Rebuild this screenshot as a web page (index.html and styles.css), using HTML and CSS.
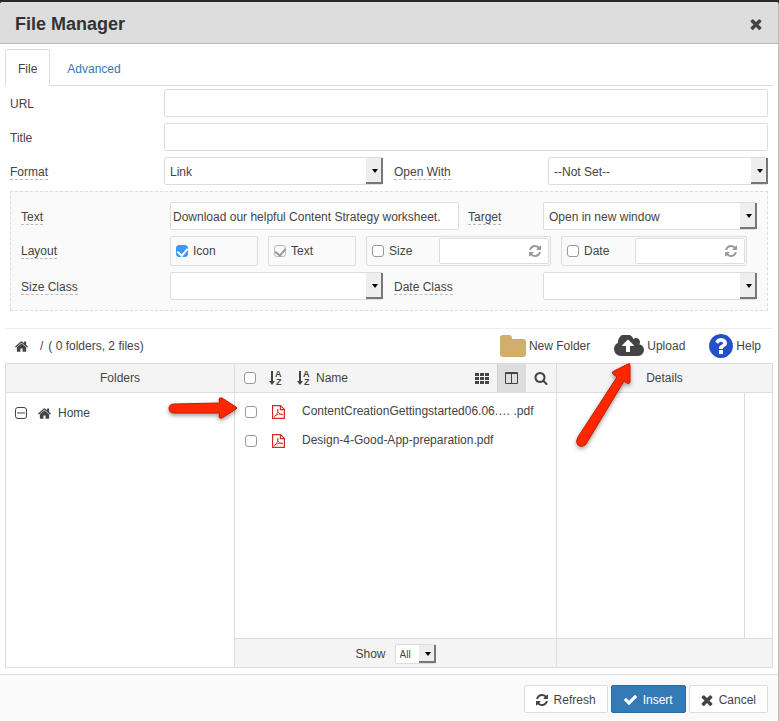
FILE: index.html
```html
<!DOCTYPE html>
<html lang="en">
<head>
  <meta charset="UTF-8">
  <meta name="viewport" content="width=device-width, initial-scale=1.0">
  <title>File Manager</title>
  <link rel="stylesheet" href="styles.css">
</head>
<body>

<!-- shared icons -->
<svg class="sprite" aria-hidden="true">
  <symbol id="i-close" viewBox="302 238 1188 1316"><path d="M1490 1322q0 40-28 68l-136 136q-28 28-68 28t-68-28l-294-294-294 294q-28 28-68 28t-68-28l-136-136q-28-28-28-68t28-68l294-294-294-294q-28-28-28-68t28-68l136-136q28-28 68-28t68 28l294 294 294-294q28-28 68-28t68 28l136 136q28 28 28 68t-28 68l-294 294 294 294q28 28 28 68z"/></symbol>
  <symbol id="i-refresh" viewBox="128 128 1536 1536"><path d="M1639 1056q0 5-1 7-64 268-268 434.500t-478 166.500q-146 0-282.500-55t-243.500-157l-129 129q-19 19-45 19t-45-19-19-45v-448q0-26 19-45t45-19h448q26 0 45 19t19 45-19 45l-137 137q71 66 161 102t187 36q134 0 250-65t186-179q11-17 53-117 8-23 30-23h192q13 0 22.500 9.500t9.500 22.500zm25-800v448q0 26-19 45t-45 19h-448q-26 0-45-19t-19-45 19-45l138-138q-148-137-349-137-134 0-250 65t-186 179q-11 17-53 117-8 23-30 23h-199q-13 0-22.500-9.500t-9.500-22.500v-7q65-268 270-434.500t480-166.500q146 0 284 55.500t245 156.500l130-129q19-19 45-19t45 19 19 45z"/></symbol>
  <symbol id="i-home" viewBox="89 248 1614 1288"><path d="M1472 992v480q0 26-19 45t-45 19h-384v-384h-256v384h-384q-26 0-45-19t-19-45v-480q0-1 .5-3t.5-3l575-474 575 474q1 2 1 6zm223-69l-62 74q-8 9-21 11h-3q-13 0-21-7l-692-577-692 577q-12 8-24 7-13-2-21-11l-62-74q-8-10-7-23.500t11-21.500l719-599q32-26 76-26t76 26l244 204v-195q0-14 9-23t23-9h192q14 0 23 9t9 23v408l219 182q10 8 11 21.500t-7 23.500z"/></symbol>
  <symbol id="i-check" viewBox="121 334 1550 1188"><path d="M1671 566q0 40-28 68l-724 724-136 136q-28 28-68 28t-68-28l-136-136-362-362q-28-28-28-68t28-68l136-136q28-28 68-28t68 28l294 295 656-657q28-28 68-28t68 28l136 136q28 28 28 68z"/></symbol>
  <symbol id="i-sort" viewBox="0 0 13 16">
    <path d="M2 1h2v10h2L3 15 0 11h2z"/>
    <text x="6" y="7" font-size="9">A</text>
    <text x="7" y="15" font-size="9">Z</text>
  </symbol>
  <symbol id="i-pdf" viewBox="0 0 13 14">
    <path d="M1 .6h7.500l3.900 3.800v9H.6V.6zM8.400.8v3.800h3.800" fill="none" stroke="#d22a24" stroke-width="1.200"/>
    <path d="M2.600 11.800c1-.4 3.300-4 3.500-7 0-.9-1-.8-.8.1.3 2.300 2.200 4.500 4.900 5 .8.100.8-.9-.2-.9-2.600 0-4.900.6-7.200 1.900-.8.500-.7 1-.2.900z" fill="none" stroke="#d22a24" stroke-width=".8"/>
  </symbol>
</svg>

<div class="dialog">
  <header class="dialog-header">
    <h1>File Manager</h1>
    <button type="button" class="close" aria-label="Close"><svg><use href="#i-close"/></svg></button>
  </header>

  <main class="dialog-body">
    <nav class="tabs">
      <a href="#file" class="active">File</a>
      <a href="#advanced">Advanced</a>
    </nav>

    <form class="properties">
      <div class="row single">
        <label for="url">URL</label>
        <input type="text" id="url">
      </div>
      <div class="row single">
        <label for="title">Title</label>
        <input type="text" id="title">
      </div>
      <div class="row double">
        <label for="format"><span class="hint">Format</span></label>
        <div class="select"><select id="format"><option>Link</option></select></div>
        <label for="openwith"><span class="hint">Open With</span></label>
        <div class="select"><select id="openwith"><option>--Not Set--</option></select></div>
      </div>

      <div class="options">
        <div class="row text-row">
          <label for="text"><span class="hint">Text</span></label>
          <input type="text" id="text" value="Download our helpful Content Strategy worksheet.">
          <label for="target"><span class="hint">Target</span></label>
          <div class="select"><select id="target"><option>Open in new window</option></select></div>
        </div>
        <div class="row layout-row">
          <span class="row-label"><span class="hint">Layout</span></span>
          <div class="boxes">
            <label class="box"><input type="checkbox" checked>Icon</label>
            <label class="box"><input type="checkbox" checked disabled>Text</label>
            <div class="box wide">
              <label><input type="checkbox">Size</label>
              <div class="reload"><input type="text" aria-label="Size value"><svg><use href="#i-refresh"/></svg></div>
            </div>
            <div class="box wide">
              <label><input type="checkbox">Date</label>
              <div class="reload"><input type="text" aria-label="Date value"><svg><use href="#i-refresh"/></svg></div>
            </div>
          </div>
        </div>
        <div class="row double">
          <label for="sizeclass"><span class="hint">Size Class</span></label>
          <div class="select"><select id="sizeclass"><option></option></select></div>
          <label for="dateclass"><span class="hint">Date Class</span></label>
          <div class="select"><select id="dateclass"><option></option></select></div>
        </div>
      </div>
    </form>

    <section class="browser">
      <div class="toolbar">
        <div class="path">
          <svg class="home"><use href="#i-home"/></svg>
          <span>/</span>
          <span>( 0 folders, 2 files)</span>
        </div>
        <div class="actions">
          <button type="button">
            <svg class="folder" viewBox="0 0 26 22"><path fill="#d2ae6d" d="M3 0h6q3 0 3 3v1h11q3 0 3 3v12q0 3-3 3H3q-3 0-3-3V3q0-3 3-3z"/></svg>
            New Folder
          </button>
          <button type="button">
            <svg class="cloud" viewBox="-64 256 1920 1280"><path d="M1216 864q0-14-9-23l-352-352q-9-9-23-9t-23 9l-351 351q-10 12-10 24 0 14 9 23t23 9h224v352q0 13 9.500 22.500t22.500 9.500h192q13 0 22.500-9.500t9.500-22.500v-352h224q13 0 22.500-9.500t9.500-22.500zm640 288q0 159-112.500 271.500t-271.500 112.500h-1088q-185 0-316.500-131.500t-131.500-316.500q0-130 70-240t188-165q-2-30-2-43 0-212 150-362t362-150q156 0 285.500 87t188.500 231q71-62 166-62 106 0 181 75t75 181q0 76-41 138 130 31 213.500 135.500t83.500 238.500z"/></svg>
            Upload
          </button>
          <button type="button">
            <svg class="help" viewBox="128 128 1536 1536"><path fill="#2551c8" d="M1024 1376v-192q0-14-9-23t-23-9h-192q-14 0-23 9t-9 23v192q0 14 9 23t23 9h192q14 0 23-9t9-23zm256-672q0-88-55.500-163t-138.500-116-170-41q-243 0-371 213-15 24 8 42l132 100q7 6 19 6 16 0 25-12 53-68 86-92 34-24 86-24 48 0 85.500 26t37.500 59q0 38-20 61t-68 45q-63 28-115.500 86.500t-52.500 125.500v36q0 14 9 23t23 9h192q14 0 23-9t9-23q0-19 21.500-49.500t54.500-49.500q32-18 49-28.500t46-35 44.500-48 28-60.500 12.500-81zm384 192q0 209-103 385.500t-279.500 279.500-385.500 103-385.500-103-279.500-279.500-103-385.500 103-385.500 279.500-279.500 385.500-103 385.500 103 279.500 279.500 103 385.500z"/></svg>
            Help
          </button>
        </div>
      </div>

      <div class="panes">
        <div class="pane">
          <div class="pane-head center">Folders</div>
          <div class="pane-body tree">
            <svg class="minus" viewBox="0 0 12 12"><rect x=".5" y=".5" width="11" height="11" rx="2.500" fill="none" stroke="#444"/><path d="M2 5.500h8v1H2z"/></svg>
            <svg class="home"><use href="#i-home"/></svg>
            <span>Home</span>
          </div>
        </div>

        <div class="pane">
          <div class="pane-head list-head">
            <input type="checkbox" aria-label="Select all">
            <button type="button" class="sort" aria-label="Sort by type"><svg><use href="#i-sort"/></svg></button>
            <button type="button" class="sort name"><svg><use href="#i-sort"/></svg>Name</button>
            <div class="views">
              <button type="button" aria-label="Thumbnails"><svg viewBox="0 0 14 11"><path d="M0 0h4v3H0zM5 0h4v3H5zM10 0h4v3h-4zM0 4h4v3H0zM5 4h4v3H5zM10 4h4v3h-4zM0 8h4v3H0zM5 8h4v3H5zM10 8h4v3h-4z"/></svg></button>
              <button type="button" class="on" aria-label="Split view"><svg viewBox="0 0 14 13"><path d="M.5.5h12v11H.5zM6.500 1v11M.5 1.500h12" fill="none" stroke="#444"/></svg></button>
              <button type="button" aria-label="Search"><svg viewBox="64 128 1664 1664"><path d="M1216 832q0-185-131.500-316.500t-316.500-131.500-316.500 131.500-131.500 316.500 131.500 316.500 316.500 131.500 316.500-131.500 131.500-316.500zm512 832q0 52-38 90t-90 38q-54 0-90-38l-343-342q-179 124-399 124-143 0-273.500-55.500t-225-150-150-225-55.500-273.500 55.500-273.500 150-225 225-150 273.500-55.500 273.500 55.500 225 150 150 225 55.500 273.500q0 220-124 399l343 343q37 37 37 90z"/></svg></button>
            </div>
          </div>
          <ul class="pane-body files">
            <li>
              <input type="checkbox" id="file1">
              <svg><use href="#i-pdf"/></svg>
              <label for="file1">ContentCreationGettingstarted06.06.… <span>.pdf</span></label>
            </li>
            <li>
              <input type="checkbox" id="file2">
              <svg><use href="#i-pdf"/></svg>
              <label for="file2">Design-4-Good-App-preparation.pdf</label>
            </li>
          </ul>
          <div class="pane-foot">
            <label for="show">Show</label>
            <div class="select small"><select id="show"><option>All</option></select></div>
          </div>
          <svg class="arrow arrow-file" viewBox="0 0 76 32"><path d="M7 8 53 7 52 4Q52 1 55 2L69 11Q71 12 69 13L55 22Q52 23 52 20L53 17 7 17Q2 17 2 12.500Q2 8 7 8z"/></svg>
        </div>

        <div class="pane">
          <div class="pane-head center">Details</div>
          <div class="pane-body details"></div>
          <div class="pane-foot"></div>
          <svg class="arrow arrow-upload" viewBox="0 0 64 92"><path d="M6 75 45 15 41 12Q39 10 42 9L56 2Q58 1 58 3L58 20Q57 23 55 21L52 19 14 82Q10 86 6 83Q3 80 6 75z"/></svg>
        </div>
      </div>
    </section>
  </main>

  <footer class="dialog-footer">
    <button type="button" class="btn"><svg><use href="#i-refresh"/></svg>Refresh</button>
    <button type="button" class="btn primary"><svg><use href="#i-check"/></svg>Insert</button>
    <button type="button" class="btn"><svg><use href="#i-close"/></svg>Cancel</button>
  </footer>
</div>

</body>
</html>
```
FILE: styles.css
```css
:root {
  --text: #444;
  --line: #ddd;
  --head: #f4f4f4;
  --link: #337ab7;
}

* {
  box-sizing: border-box;
}

body {
  margin: 0;
  padding-top: 2px;
  background: #2a2727;
  color: var(--text);
  font: 12px/16px "Liberation Sans", Arial, sans-serif;
}

.sprite {
  display: none;
}

svg {
  fill: currentColor;
  flex: none;
}

input, select, button {
  font: inherit;
  color: inherit;
  margin: 0;
}

button {
  border: 0;
  padding: 0;
  background: none;
  cursor: pointer;
}

.dialog {
  display: flex;
  flex-direction: column;
  min-height: calc(100vh - 2px);
  background: #fff;
  border-right: 1px solid #bbb;
  border-radius: 3px 3px 0 0;
  overflow: hidden;
}

.dialog-header {
  display: flex;
  justify-content: space-between;
  align-items: center;
  height: 42px;
  padding: 2px 16px 0 15px;
  background: #ddd;
  border-bottom: 1px solid #b5b5b5;
}

.dialog-header h1 {
  margin: 0;
  font-size: 18px;
  line-height: 24px;
  color: #333;
}

.close svg {
  display: block;
  width: 12px;
  height: 12px;
}

.dialog-body {
  flex: 1;
  display: flex;
  flex-direction: column;
  padding: 5px 5px 6px;
}

/* tabs */
.tabs {
  display: flex;
  height: 37px;
  border-bottom: 1px solid var(--line);
}

.tabs a {
  height: 37px;
  padding: 12px 17px 0;
  color: var(--link);
  text-decoration: none;
}

.tabs .active {
  padding: 11px 12px 0;
  color: var(--text);
  background: #fff;
  border: 1px solid var(--line);
  border-bottom: 0;
  border-radius: 2px 2px 0 0;
}

/* form */
.properties {
  display: flex;
  flex-direction: column;
  gap: 6px;
  padding: 3px 5px 17px;
}

.row {
  display: grid;
  align-items: center;
}

.row > label {
  padding-top: 2px;
}

.single {
  grid-template-columns: 154fr 604fr;
}

.double {
  grid-template-columns: 154fr 219fr 165fr 220fr;
}

.row > .select + label {
  padding-left: 11px;
}

.hint {
  border-bottom: 1px dashed #bbb;
  line-height: 13px;
  display: inline-block;
}

input[type="text"], select {
  display: block;
  width: 100%;
  min-width: 0;
  height: 28px;
  padding: 2px 2px 0;
  background: #fff;
  border: 1px solid var(--line);
  border-radius: 2px;
}

.select {
  position: relative;
}

.select select {
  appearance: none;
  padding: 2px 18px 0 5px;
}

.select::before {
  content: "";
  position: absolute;
  top: 1px;
  right: 0;
  bottom: 1px;
  width: 15px;
  background: #eee;
  border: solid #777;
  border-width: 0 2px 2px 0;
  pointer-events: none;
}

.select::after {
  content: "";
  position: absolute;
  top: calc(50% - 2px);
  right: 5px;
  border: solid transparent;
  border-width: 4px 3px 0;
  border-top-color: #000;
  pointer-events: none;
}

.options {
  display: flex;
  flex-direction: column;
  gap: 6px;
  padding: 10px;
  background: #fafafa;
  border: 1px dashed var(--line);
}

.options .double {
  grid-template-columns: 149fr 213fr 160fr 214fr;
}

.text-row {
  grid-template-columns: 149fr 289fr 84fr 214fr;
}

.text-row input + label {
  padding-left: 9px;
}

.layout-row {
  grid-template-columns: 149fr 587fr;
}

.boxes {
  display: grid;
  grid-template-columns: 88fr 88fr 185fr 186fr;
  gap: 10px;
  padding-right: 10px;
}

.box {
  display: flex;
  align-items: center;
  height: 30px;
  padding: 0 1px 0 5px;
  border: 1px solid var(--line);
  border-radius: 2px;
}

.box label {
  display: flex;
  align-items: center;
}

.wide {
  justify-content: space-between;
}

.box input[type="checkbox"] {
  margin-right: 5px;
}

.reload {
  position: relative;
  width: 62%;
}

.reload input[type="text"] {
  height: 26px;
  padding-right: 24px;
}

.reload svg {
  position: absolute;
  top: 7px;
  right: 8px;
  width: 12px;
  height: 12px;
  color: #999;
}

input[type="checkbox"] {
  appearance: none;
  flex: none;
  display: flex;
  justify-content: center;
  width: 12px;
  height: 12px;
  background: #fff;
  border: 1px solid #999;
  border-radius: 3px;
}

input[type="checkbox"]:checked::after {
  content: "";
  width: 5px;
  height: 8px;
  border: solid #fff;
  border-width: 0 2px 2px 0;
  transform: rotate(40deg);
}

input[type="checkbox"]:checked {
  background: #3b99fc;
  border-color: #3b99fc;
}

input[type="checkbox"]:disabled {
  background: #fafafa;
  border-color: #bbb;
}

input[type="checkbox"]:disabled::after {
  border-color: #999;
}

/* file browser */
.browser {
  flex: 1;
  display: flex;
  flex-direction: column;
  border-top: 1px solid #eee;
}

.toolbar {
  display: flex;
  justify-content: space-between;
  align-items: center;
  height: 34px;
  padding: 0 12px 0 10px;
}

.path, .actions, .actions button {
  display: flex;
  align-items: center;
}

.path span {
  margin-left: 5px;
}

.path .home + span {
  margin-left: 12px;
}

.home {
  width: 13px;
  height: 11px;
}

.actions {
  gap: 24px;
}

.actions button {
  gap: 3px;
}

.folder {
  width: 26px;
  height: 22px;
}

.cloud {
  width: 30px;
  height: 22px;
}

.help {
  width: 24px;
  height: 24px;
}

.panes {
  flex: 1;
  display: grid;
  grid-template-columns: 228fr 322fr 216fr;
  border: 1px solid var(--line);
}

.pane {
  position: relative;
  display: flex;
  flex-direction: column;
  min-width: 0;
}

.pane + .pane {
  border-left: 1px solid var(--line);
}

.pane-head {
  display: flex;
  align-items: center;
  height: 29px;
  background: var(--head);
  border-bottom: 1px solid var(--line);
}

.center {
  justify-content: center;
}

.pane-body {
  flex: 1;
  min-height: 120px;
}

.pane-foot {
  display: flex;
  justify-content: center;
  align-items: center;
  gap: 9px;
  height: 29px;
  padding-top: 2px;
  background: var(--head);
  border-top: 1px solid var(--line);
}

.tree {
  display: flex;
  align-items: center;
  align-self: flex-start;
  flex: none;
  min-height: 0;
  padding: 12px 9px;
}

.minus {
  width: 12px;
  height: 12px;
  margin-right: 11px;
}

.tree span {
  margin-left: 7px;
}

.list-head {
  padding-left: 9px;
}

.sort {
  display: flex;
  align-items: center;
  margin-left: 13px;
}

.sort svg {
  width: 13px;
  height: 16px;
  font-weight: bold;
}

.name {
  margin-left: 15px;
  gap: 6px;
}

.views {
  display: flex;
  align-self: stretch;
  margin-left: auto;
}

.views button {
  display: flex;
  justify-content: center;
  align-items: center;
  width: 30px;
}

.views svg {
  width: 14px;
  height: 13px;
}

.views .on {
  width: 29px;
  background: #ddd;
  border-left: 1px solid #d0d0d0;
}

.files {
  margin: 0;
  padding: 4px 10px;
  list-style: none;
}

.files li {
  display: flex;
  align-items: center;
  height: 29px;
}

.files svg {
  width: 13px;
  height: 14px;
  margin: 0 17px 0 15px;
}

.files label {
  padding-bottom: 2px;
  white-space: nowrap;
}

.details {
  margin-right: 27px;
  border-right: 1px solid var(--line);
}

.small select {
  width: 41px;
  height: 20px;
  padding: 2px 16px 0 4px;
  font-size: 10px;
}

/* red pointers laid over the panes */
.arrow {
  position: absolute;
  fill: #ff2600;
  stroke: #c41d00;
  filter: drop-shadow(0 2px 2px rgba(0, 0, 0, 0.4));
  pointer-events: none;
}

.arrow-file {
  top: 32px;
  left: -68px;
  width: 76px;
  height: 32px;
}

.arrow-upload {
  top: -2px;
  left: 15px;
  width: 64px;
  height: 92px;
}

/* footer */
.dialog-footer {
  display: flex;
  justify-content: flex-end;
  gap: 3px;
  padding: 10px 10px 8px;
  background: #fafafa;
  border-top: 1px solid var(--line);
}

.btn {
  display: flex;
  align-items: center;
  gap: 6px;
  height: 28px;
  padding: 2px 11px 0;
  background: #fff;
  border: 1px solid var(--line);
  border-radius: 2px;
}

.btn svg {
  width: 12px;
  height: 12px;
}

.primary {
  color: #fff;
  padding: 2px 12px 0;
  background: var(--link);
  border-color: #2e6da4;
}

.primary svg {
  width: 13px;
}
```
